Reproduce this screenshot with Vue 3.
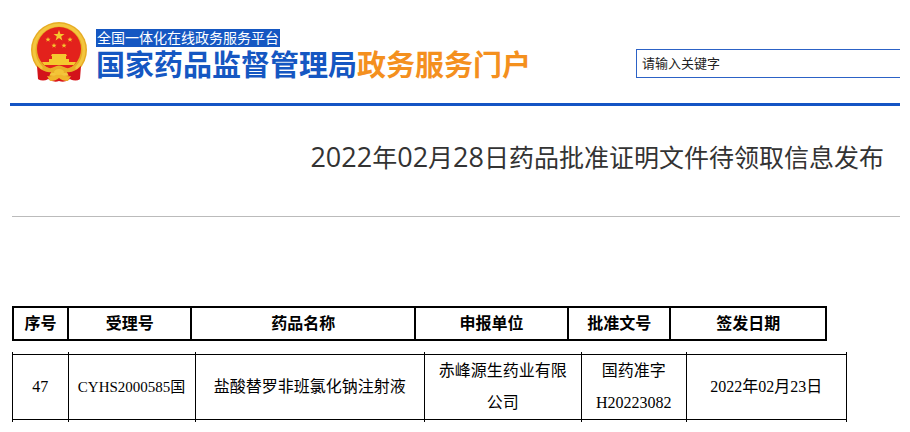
<script setup>
import { ref } from 'vue'

const keyword = ref('')

const titleParts = [
  { text: '2022', num: true },
  { text: '年' },
  { text: '02', num: true },
  { text: '月' },
  { text: '28', num: true },
  { text: '日药品批准证明文件待领取信息发布' }
]

const headers = [
  { label: '序号', width: 54 },
  { label: '受理号', width: 123 },
  { label: '药品名称', width: 225 },
  { label: '申报单位', width: 153 },
  { label: '批准文号', width: 102 },
  { label: '签发日期', width: 156 }
]

const cells = [
  { key: 'index', lines: ['47'], width: 55 },
  { key: 'code', lines: ['CYHS2000585国'], width: 127 },
  { key: 'name', lines: ['盐酸替罗非班氯化钠注射液'], width: 230 },
  { key: 'company', lines: ['赤峰源生药业有限', '公司'], width: 157 },
  { key: 'approval', lines: ['国药准字', 'H20223082'], width: 105 },
  { key: 'date', lines: ['2022年02月23日'], width: 160 }
]

const percent = (cols, width) => {
  const total = cols.reduce((sum, col) => sum + col.width, 0)
  return (width / total) * 100 + '%'
}
</script>

<template>
  <div class="page">
    <header class="header">
      <div class="brand">
        <svg class="emblem" viewBox="0 0 56 60" aria-hidden="true">
          <path d="M8 42 L7 57 Q12 60 17 57 Q23 61 28 59 Q34 61 39 57 Q45 60 49 57 L48 42Z" fill="#d9171c" />
          <circle cx="28" cy="28" r="28" fill="#e7ac24" />
          <circle cx="28" cy="28" r="25" fill="none" stroke="#f3c63f" stroke-width="3" />
          <circle cx="28" cy="27" r="22" fill="#e3211c" />
          <g fill="#f5c92f">
            <path d="M28 8l1.4 4h4.1l-3.3 2.5 1.2 4-3.4-2.4-3.4 2.4 1.2-4-3.3-2.5h4.1z" />
            <path d="M17 15l.7 1.7h1.8l-1.4 1.2.5 1.8-1.6-1.1-1.6 1.1.5-1.8-1.4-1.2h1.8z" />
            <path d="M39 15l.7 1.7h1.8l-1.4 1.2.5 1.8-1.6-1.1-1.6 1.1.5-1.8-1.4-1.2h1.8z" />
            <path d="M23 21l.7 1.7h1.8l-1.4 1.2.5 1.8-1.6-1.1-1.6 1.1.5-1.8-1.4-1.2h1.8z" />
            <path d="M33 21l.7 1.7h1.8l-1.4 1.2.5 1.8-1.6-1.1-1.6 1.1.5-1.8-1.4-1.2h1.8z" />
            <path d="M21 32h14l1 2h-1v3h3v3h7l-2 3H13l-2-3h7v-3h3v-3h-1z" />
          </g>
          <path d="M12 43 Q18 48 23 45 Q28 42 33 45 Q38 48 44 43 L45 49 Q37 53 33 50 Q28 47 23 50 Q19 53 11 49Z" fill="#e9ae28" />
          <path d="M6 44 Q13 51 20 50 L17 57 Q12 59 7 57Z" fill="#d3131a" />
          <path d="M50 44 Q43 51 36 50 L39 57 Q44 59 49 57Z" fill="#d3131a" />
          <path d="M16 54 Q23 55 28 51 Q33 55 40 54 L37 59 Q31 59 28 56 Q25 59 19 59Z" fill="#efb62c" />
          <ellipse cx="28" cy="50" rx="5" ry="3" fill="#f3c437" />
        </svg>
        <div class="brand-text">
          <span class="tagline">全国一体化在线政务服务平台</span>
          <div class="site-name">国家药品监督管理局<span class="portal">政务服务门户</span></div>
        </div>
      </div>
      <input v-model="keyword" class="search" type="text" placeholder="请输入关键字" aria-label="请输入关键字" />
    </header>

    <main class="content">
      <h1 class="title">
        <span v-for="(part, i) in titleParts" :key="i" :class="{ num: part.num }">{{ part.text }}</span>
      </h1>

      <table class="head-table">
        <thead>
          <tr>
            <th v-for="col in headers" :key="col.label" :style="{ width: percent(headers, col.width) }">
              {{ col.label }}
            </th>
          </tr>
        </thead>
      </table>

      <table class="data-table">
        <tbody>
          <tr>
            <td v-for="cell in cells" :key="cell.key" :style="{ width: percent(cells, cell.width) }">
              <div :class="['cell', cell.key]">
                <span v-for="line in cell.lines" :key="line">{{ line }}</span>
              </div>
            </td>
          </tr>
        </tbody>
      </table>
    </main>
  </div>
</template>

<style>
body {
  margin: 0;
  background: #fff;
}
</style>

<style scoped>
.page {
  padding: 0 10px;
  font-family: "Liberation Sans", "Noto Sans CJK SC", sans-serif;
}

.header {
  display: flex;
  justify-content: space-between;
  align-items: flex-start;
  box-sizing: border-box;
  height: 106px;
  padding: 22px 0 0 21px;
  border-bottom: 3px solid #1454c4;
}

.brand {
  display: flex;
  gap: 9px;
}

.emblem {
  width: 56px;
  height: 60px;
}

.brand-text {
  display: flex;
  flex-direction: column;
  align-items: flex-start;
  padding-top: 7px;
  white-space: nowrap;
}

.tagline {
  padding: 0 1px;
  background: #1557c2;
  color: #fff;
  font-size: 14px;
  line-height: 18px;
}

.site-name {
  color: #1557c2;
  font-size: 29px;
  font-weight: bold;
  line-height: 38px;
}

.portal {
  color: #f4901e;
}

.search {
  appearance: none;
  box-sizing: border-box;
  width: 264px;
  height: 29px;
  margin-top: 27px;
  padding: 0 5px;
  border: 1px solid #2c62c6;
  border-right: none;
  border-radius: 0;
  outline: none;
  background: #fff;
  color: #222;
  font-family: inherit;
  font-size: 13px;
}

.search::placeholder {
  color: #222;
  opacity: 1;
}

.content {
  padding-left: 2px;
}

.title {
  display: flex;
  justify-content: flex-end;
  align-items: baseline;
  margin: 0 0 89px;
  padding: 31px 16px 39px 0;
  border-bottom: 1px solid #bbb;
  color: #333;
  font-family: "Open Sans", "Noto Sans CJK SC", sans-serif;
  font-size: 25px;
  font-weight: normal;
  line-height: 40px;
  white-space: nowrap;
}

.title .num {
  font-size: 27px;
}

table {
  border-collapse: collapse;
  table-layout: fixed;
  color: #000;
  font-size: 16px;
}

.head-table {
  width: 91.8%;
  margin-bottom: 11px;
}

.head-table th {
  height: 31px;
  padding: 0;
  border: 2px solid #000;
  line-height: 24px;
}

.data-table {
  width: 94%;
  font-family: "Liberation Serif", "Noto Sans CJK SC", serif;
}

.data-table td {
  height: 66px;
  padding: 2px 0;
  border-right: 1px solid #000;
  border-left: 1px solid #000;
}

.cell {
  display: flex;
  flex-direction: column;
  align-items: center;
  justify-content: center;
  box-sizing: border-box;
  height: 66px;
  border-top: 1px solid #000;
  border-bottom: 1px solid #000;
  line-height: 32px;
  white-space: nowrap;
}

.code {
  font-size: 15px;
}
</style>
